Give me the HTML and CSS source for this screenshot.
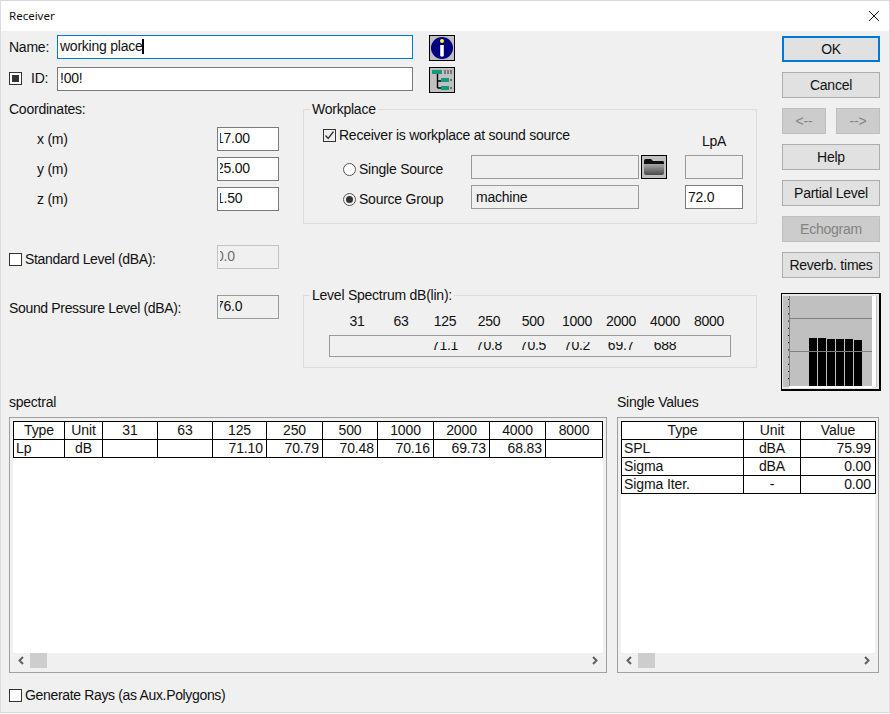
FILE: index.html
```html
<!DOCTYPE html>
<html lang="en">
<head>
  <meta charset="UTF-8" />
  <meta name="viewport" content="width=device-width, initial-scale=1.0"/>
  <title>Receiver</title>
  <link rel="stylesheet" href="styles.css">
</head>
<body>
  <div class="window">
    <header class="titlebar">
      <span class="title">Receiver</span>
      <svg class="close" width="12" height="12" viewBox="0 0 12 12"><path d="M1 1 L11 11 M11 1 L1 11" stroke="#111" stroke-width="1" fill="none"/></svg>
    </header>

    <div class="top">
      <div class="left-col">
        <div class="head-row">
          <span class="head-label">Name:</span>
          <div class="field head-field focus">working place<span class="caret"></span></div>
          <button class="icon-btn">
            <svg width="24" height="24" viewBox="0 0 24 24">
              <circle cx="12" cy="12" r="11" fill="#000080"/>
              <circle cx="12" cy="5" r="2" fill="#ffff20"/>
              <path d="M10.2 9 H13.8 V20 Q12 21.5 10.2 20 Z" fill="#fff"/>
            </svg>
          </button>
        </div>
        <div class="head-row">
          <span class="head-label id-label"><span class="check square"></span>ID:</span>
          <div class="field head-field">!00!</div>
          <button class="icon-btn">
            <svg width="24" height="24" viewBox="0 0 24 24">
              <rect x="2" y="2" width="10" height="4" fill="#0f9a80"/>
              <path d="M14 3 H22 M14 5 H22" stroke="#333" stroke-width="1" stroke-dasharray="2 1"/>
              <path d="M7.5 6 V20 M7.5 13 H11 M7.5 20 H11" stroke="#000" stroke-width="1.4" fill="none"/>
              <rect x="11" y="10" width="8" height="4" fill="#0f9a80"/>
              <rect x="11" y="18" width="8" height="4" fill="#0f9a80"/>
              <path d="M21 11 V13 M21 19 V21" stroke="#222" stroke-width="1"/>
            </svg>
          </button>
        </div>

        <div class="mid">
          <div class="coords">
            <div class="text-line">Coordinates:</div>
            <div class="coord-row first"><span class="coord-label">x (m)</span><div class="field num"><span class="clip">17.00</span></div></div>
            <div class="coord-row"><span class="coord-label">y (m)</span><div class="field num"><span class="clip">25.00</span></div></div>
            <div class="coord-row"><span class="coord-label">z (m)</span><div class="field num"><span class="clip">1.50</span></div></div>
            <div class="level-row standard">
              <span class="check-label tight"><span class="check"></span>Standard Level (dBA):</span>
              <div class="field num disabled"><span class="clip">0.0</span></div>
            </div>
            <div class="level-row pressure">
              <span class="pressure-label tight">Sound Pressure Level (dBA):</span>
              <div class="field num readonly"><span class="clip">76.0</span></div>
            </div>
          </div>

          <div class="groups">
            <fieldset class="group workplace">
              <legend>Workplace</legend>
              <div class="work-check">
                <span class="check-label"><span class="check checked">
                  <svg width="11" height="11" viewBox="0 0 11 11"><path d="M1.5 5.5 L4.2 8.5 L9.5 1.5" stroke="#333" stroke-width="1.3" fill="none"/></svg>
                </span>Receiver is workplace at sound source</span>
                <span class="lpa-head">LpA</span>
              </div>
              <div class="source-row">
                <span class="radio-label"><span class="radio"></span>Single Source</span>
                <div class="field readonly source-field"></div>
                <button class="folder-btn">
                  <svg width="22" height="20" viewBox="0 0 22 20">
                    <defs><linearGradient id="fold" x1="0" y1="0" x2="0" y2="1"><stop offset="0" stop-color="#a8a8a8"/><stop offset="1" stop-color="#484848"/></linearGradient></defs>
                    <path d="M1 4 Q1 2 3 2 H8 L10 4 H20 Q21 4 21 6 V8 H1 Z" fill="#111"/>
                    <path d="M1 7 H21 V16 Q21 18 19 18 H3 Q1 18 1 16 Z" fill="url(#fold)"/>
                  </svg>
                </button>
                <div class="field readonly lpa"></div>
              </div>
              <div class="source-row">
                <span class="radio-label"><span class="radio on"></span>Source Group</span>
                <div class="field readonly source-field">machine</div>
                <span></span>
                <div class="field lpa">72.0</div>
              </div>
            </fieldset>

            <fieldset class="group spectrum">
              <legend>Level Spectrum dB(lin):</legend>
              <div class="freqs">
                <span>31</span><span>63</span><span>125</span><span>250</span><span>500</span><span>1000</span><span>2000</span><span>4000</span><span>8000</span>
              </div>
              <div class="spec-values">
                <span></span><span></span><span>71.1</span><span>70.8</span><span>70.5</span><span>70.2</span><span>69.7</span><span>688</span><span></span>
              </div>
            </fieldset>
          </div>
        </div>
      </div>

      <aside class="side">
        <button class="btn default">OK</button>
        <button class="btn">Cancel</button>
        <div class="btn-pair">
          <button class="btn off">&lt;--</button>
          <button class="btn off">--&gt;</button>
        </div>
        <button class="btn">Help</button>
        <button class="btn">Partial Level</button>
        <button class="btn off">Echogram</button>
        <button class="btn">Reverb. times</button>
        <div class="graph">
          <svg width="100" height="98" viewBox="0 0 100 98">
            <rect x="0" y="0" width="100" height="98" fill="#000"/>
            <rect x="1" y="1" width="97" height="95" fill="#e8e8e8"/>
            <rect x="2" y="3" width="94" height="91" fill="#c0c0c0"/>
            <rect x="91" y="3" width="4" height="91" fill="#fff"/>
            <rect x="8" y="93" width="83" height="2" fill="#fff"/>
            <path d="M8.5 3 V93" stroke="#808080"/>
            <path d="M7.5 6 V92" stroke="#000" stroke-dasharray="1 6.2"/>
            <rect x="28" y="45" width="8" height="48"/>
            <rect x="37" y="45" width="8" height="48"/>
            <rect x="46" y="46" width="8" height="47"/>
            <rect x="55" y="46" width="8" height="47"/>
            <rect x="64" y="46" width="8" height="47"/>
            <rect x="73" y="47" width="8" height="46"/>
            <path d="M9 25.5 H91 M9 58.5 H91" stroke="#808080"/>
          </svg>
        </div>
      </aside>
    </div>

    <div class="panels">
      <section class="panel-wrap wide">
        <h3>spectral</h3>
        <div class="panel">
          <div class="panel-inner">
            <table class="data spectral">
              <colgroup><col class="c51"><col class="c38"><col class="c55"><col class="c55"><col class="c54"><col class="c56"><col class="c55"><col class="c56"><col class="c56"><col class="c56"><col class="c57"></colgroup>
              <tr><th>Type</th><th>Unit</th><th>31</th><th>63</th><th>125</th><th>250</th><th>500</th><th>1000</th><th>2000</th><th>4000</th><th>8000</th></tr>
              <tr><td>Lp</td><td class="mid-cell">dB</td><td></td><td></td><td class="num-cell">71.10</td><td class="num-cell">70.79</td><td class="num-cell">70.48</td><td class="num-cell">70.16</td><td class="num-cell">69.73</td><td class="num-cell">68.83</td><td></td></tr>
            </table>
          </div>
          <div class="scrollbar">
            <span class="arrow"><svg width="9" height="9" viewBox="0 0 9 9"><path d="M6 1 L2.5 4.5 L6 8" stroke="#606060" stroke-width="2" fill="none"/></svg></span>
            <span class="thumb"></span>
            <span class="arrow end"><svg width="9" height="9" viewBox="0 0 9 9"><path d="M3 1 L6.5 4.5 L3 8" stroke="#606060" stroke-width="2" fill="none"/></svg></span>
          </div>
        </div>
      </section>

      <section class="panel-wrap narrow">
        <h3>Single Values</h3>
        <div class="panel">
          <div class="panel-inner">
            <table class="data single">
              <colgroup><col class="c122"><col class="c57"><col class="c75"></colgroup>
              <tr><th>Type</th><th>Unit</th><th>Value</th></tr>
              <tr><td>SPL</td><td class="mid-cell">dBA</td><td class="num-cell">75.99</td></tr>
              <tr><td>Sigma</td><td class="mid-cell">dBA</td><td class="num-cell">0.00</td></tr>
              <tr><td>Sigma Iter.</td><td class="mid-cell">-</td><td class="num-cell">0.00</td></tr>
            </table>
          </div>
          <div class="scrollbar">
            <span class="arrow"><svg width="9" height="9" viewBox="0 0 9 9"><path d="M6 1 L2.5 4.5 L6 8" stroke="#606060" stroke-width="2" fill="none"/></svg></span>
            <span class="thumb"></span>
            <span class="arrow end"><svg width="9" height="9" viewBox="0 0 9 9"><path d="M3 1 L6.5 4.5 L3 8" stroke="#606060" stroke-width="2" fill="none"/></svg></span>
          </div>
        </div>
      </section>
    </div>

    <footer class="footer">
      <span class="check-label tight"><span class="check"></span>Generate Rays (as Aux.Polygons)</span>
    </footer>
  </div>
</body>
</html>
```

FILE: styles.css
```css
* {
  box-sizing: border-box;
  padding: 0;
  margin: 0;
  font-family: 'Liberation Sans', Arial, sans-serif;
}

body {
  width: 890px;
  height: 714px;
  background-color: #fff;
  overflow: hidden;
  font-size: 14px;
  letter-spacing: -0.24px;
  line-height: 16px;
  color: #111;
}

.tight {
  letter-spacing: -0.34px;
}

.window {
  width: 890px;
  height: 713px;
  background-color: #f0f0f0;
  border-top: 1px solid #d8d8d8;
  border-left: 1px solid #dcdcdc;
  border-right: 1px solid #dcdcdc;
  border-bottom: 1px solid #d8d8d8;
}

.titlebar {
  height: 30px;
  background-color: #fff;
  display: flex;
  align-items: center;
  justify-content: space-between;
  padding: 0 9px 0 8px;
}

.title {
  font-family: 'Noto Sans', sans-serif;
  font-size: 11.5px;
  letter-spacing: normal;
}

.top {
  display: flex;
  padding-left: 8px;
}

.left-col {
  width: 748px;
  padding-top: 4px;
}

/* name + id rows */
.head-row {
  display: flex;
  height: 24px;
  margin-bottom: 8px;
}

.head-label {
  width: 48px;
  line-height: 24px;
}

.id-label {
  display: flex;
  align-items: center;
  gap: 9px;
  height: 22px;
}

.field {
  height: 24px;
  border: 1px solid #7a7a7a;
  background-color: #fff;
  padding: 0 2px;
  line-height: 20px;
  white-space: nowrap;
  overflow: hidden;
}

.field.focus {
  border-color: #0078d7;
}

.head-field {
  width: 356px;
}

.caret {
  display: inline-block;
  width: 2px;
  height: 15px;
  background-color: #000;
  vertical-align: -3px;
}

.icon-btn {
  width: 26px;
  height: 26px;
  margin-left: 16px;
  border: 1px solid #000;
  background-color: #c0c0c0;
  display: flex;
  align-items: center;
  justify-content: center;
  flex-shrink: 0;
}

.check {
  width: 13px;
  height: 13px;
  border: 1px solid #333;
  background-color: #fff;
  display: inline-flex;
  align-items: center;
  justify-content: center;
  flex-shrink: 0;
}

.check.square::after {
  content: "";
  width: 7px;
  height: 7px;
  background-color: #333;
}

.check.checked {
  background-color: #f0f0f0;
}

.check-label,
.radio-label {
  display: flex;
  align-items: center;
  gap: 3px;
  white-space: nowrap;
}

.radio-label {
  padding-top: 4px;
}

.radio {
  width: 13px;
  height: 13px;
  border: 1px solid #555;
  border-radius: 50%;
  background-color: #fff;
  display: inline-flex;
  align-items: center;
  justify-content: center;
}

.radio.on {
  background-color: #f0f0f0;
}

.radio.on::after {
  content: "";
  width: 7px;
  height: 7px;
  border-radius: 50%;
  background-color: #333;
}

/* middle part */
.mid {
  display: flex;
  margin-top: 10px;
}

.coords {
  width: 294px;
}

.text-line {
  height: 16px;
}

.coord-row,
.level-row {
  width: 270px;
  display: flex;
  justify-content: space-between;
  align-items: center;
}

.coord-row {
  margin-top: 6px;
}

.coord-row.first {
  margin-top: 10px;
}

.coord-label {
  padding-left: 28px;
}

.level-row.standard {
  margin-top: 34px;
}

.level-row.standard .check-label {
  padding-top: 4px;
}

.level-row.pressure {
  margin-top: 26px;
}

.pressure-label {
  padding-top: 2px;
}

.num {
  width: 62px;
  padding: 0 0 0 2px;
}

/* number boxes cut the first digit off, same as the old dialog */
.clip {
  display: block;
  overflow: hidden;
  text-indent: -4px;
}

.disabled {
  background-color: #f0f0f0;
  border-color: #c4c4c4;
  color: #6d6d6d;
}

.readonly {
  background-color: #f0f0f0;
  border-color: #9a9a9a;
}

.groups {
  width: 454px;
}

.group {
  border: 1px solid #dcdcdc;
  min-width: 0;
}

.group legend {
  margin-left: 6px;
  padding: 0 2px;
}

.workplace {
  padding: 10px 13px 14px 19px;
}

.workplace legend {
  margin-left: -13px;
}

.work-check {
  display: flex;
  justify-content: space-between;
  height: 16px;
}

.lpa-head {
  width: 58px;
  margin-top: 6px;
  text-align: center;
}

.source-row {
  display: grid;
  grid-template-columns: 128px 168px 46px 58px;
  margin-left: 20px;
  margin-top: 6px;
}

.work-check + .source-row {
  margin-top: 12px;
}

.source-field,
.lpa {
  line-height: 22px;
}

.source-field {
  padding-left: 4px;
}

.folder-btn {
  width: 26px;
  height: 24px;
  margin-left: 2px;
  border: 1px solid #000;
  background-color: #c0c0c0;
  display: flex;
  align-items: center;
  justify-content: center;
}

.spectrum {
  margin-top: 63px;
  padding: 10px 0 10px;
}

.freqs,
.spec-values {
  display: grid;
  grid-template-columns: repeat(9, 44px);
  text-align: center;
}

.freqs {
  margin-left: 31px;
}

.spec-values {
  margin-left: 25px;
  margin-top: 6px;
  width: 402px;
  height: 22px;
  border: 1px solid #9a9a9a;
  padding-left: 5px;
}

.spec-values span {
  height: 13px;
  margin-top: 6px;
  line-height: 7px;
  overflow: hidden;
}

/* buttons on the right */
.side {
  width: 100px;
  margin-left: 24px;
  padding: 5px 0 0 1px;
  display: flex;
  flex-direction: column;
  gap: 10px;
}

.btn {
  width: 98px;
  height: 26px;
  font-size: 14px;
  letter-spacing: -0.24px;
  color: #111;
  background-color: #e1e1e1;
  border: 1px solid #adadad;
  flex-shrink: 0;
}

.btn.default {
  border: 2px solid #0078d7;
}

.btn.off {
  background-color: #cccccc;
  border-color: #bfbfbf;
  color: #838383;
}

.btn-pair {
  display: flex;
  gap: 10px;
}

.btn-pair .btn {
  width: 44px;
}

.graph {
  width: 100px;
  height: 98px;
  margin: 5px 0 0 -1px;
}

.graph svg {
  display: block;
}

/* tables */
.panels {
  display: flex;
  gap: 10px;
  padding-left: 8px;
  margin-top: 2px;
}

.panel-wrap h3 {
  font-size: 14px;
  font-weight: normal;
  height: 17px;
  padding-top: 1px;
  margin-bottom: 7px;
}

.wide {
  width: 598px;
}

.narrow {
  width: 262px;
}

.panel {
  height: 256px;
  border: 1px solid #a0a0a0;
  padding: 3px;
}

.panel-inner {
  height: 232px;
  background-color: #fff;
}

table.data {
  border-collapse: collapse;
  table-layout: fixed;
}

.spectral {
  width: 589px;
}

.single {
  width: 254px;
}

.c38 { width: 38px; }
.c51 { width: 51px; }
.c54 { width: 54px; }
.c55 { width: 55px; }
.c56 { width: 56px; }
.c57 { width: 57px; }
.c75 { width: 75px; }
.c122 { width: 122px; }

.data th,
.data td {
  height: 18px;
  border: 1px solid #000;
  padding: 0 2px;
  font-size: 14px;
  font-weight: normal;
  letter-spacing: -0.1px;
  line-height: 16px;
  text-align: left;
  vertical-align: top;
  white-space: nowrap;
  overflow: hidden;
}

.data th,
.data .mid-cell {
  text-align: center;
}

.data .num-cell {
  text-align: right;
  padding-right: 3px;
}

.single .num-cell {
  padding-right: 4px;
}

.scrollbar {
  height: 15px;
  display: flex;
}

.arrow {
  width: 17px;
  display: flex;
  align-items: center;
  justify-content: center;
}

.arrow.end {
  margin-left: auto;
}

.thumb {
  width: 17px;
  background-color: #cdcdcd;
}

.footer {
  margin: 14px 0 0 8px;
}
```
